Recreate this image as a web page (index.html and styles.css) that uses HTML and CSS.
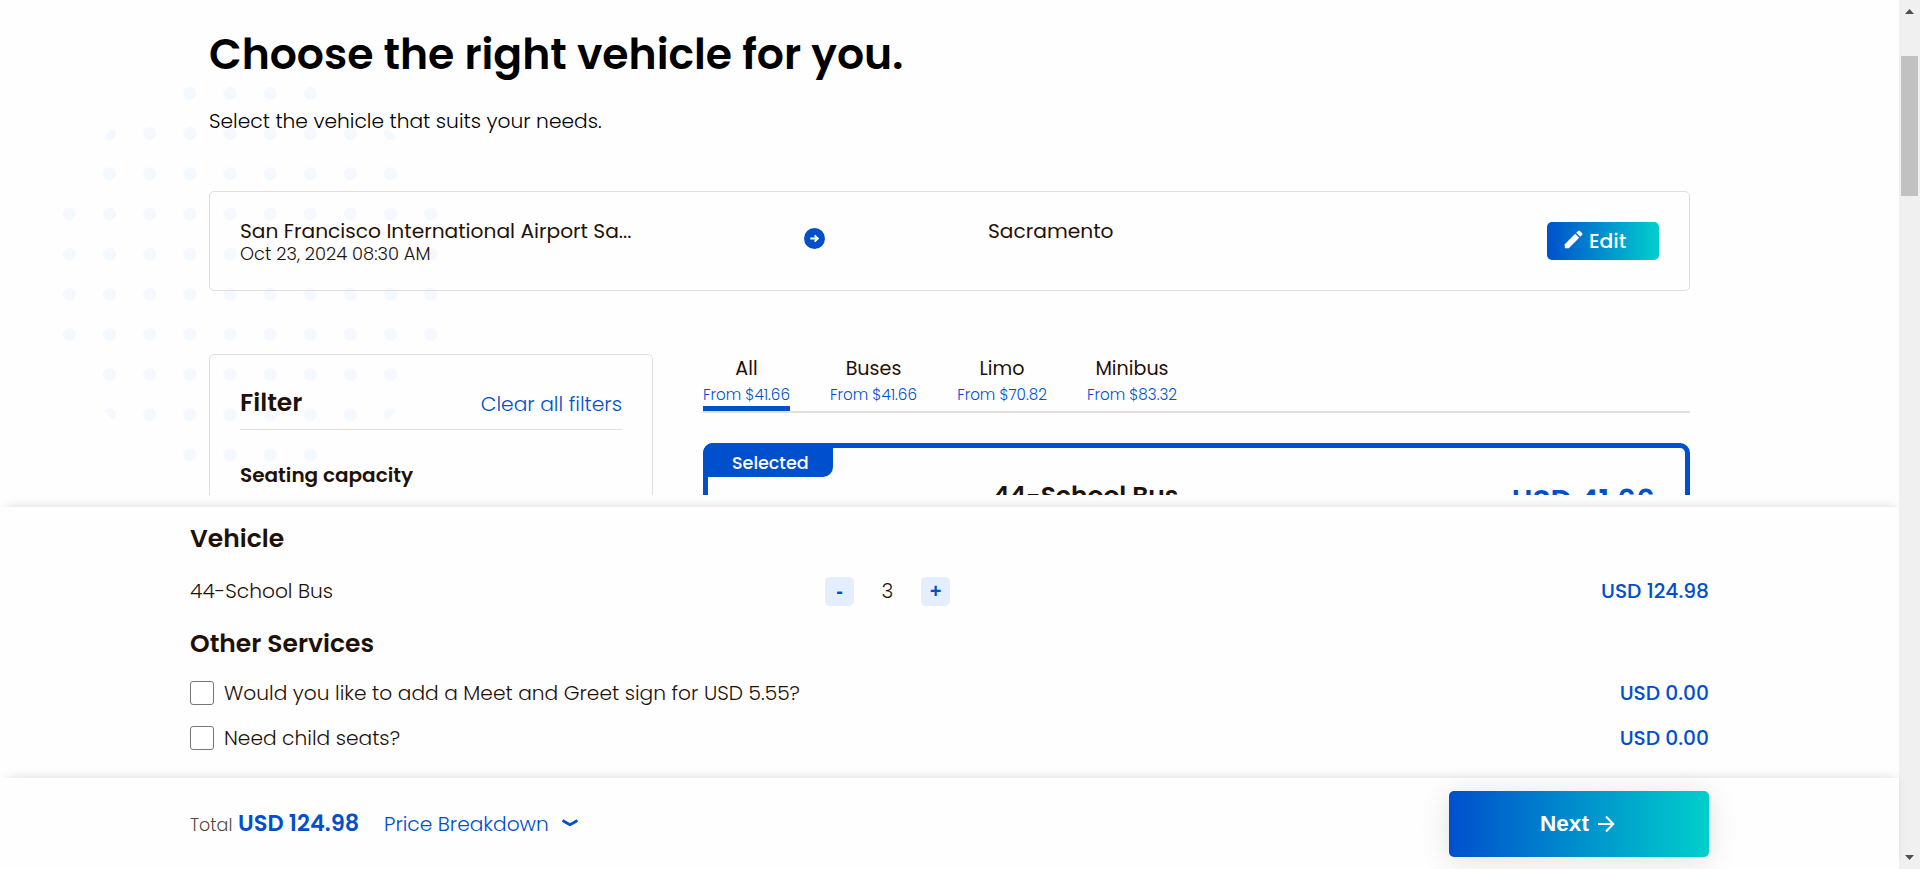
FILE: index.html
```html
<!DOCTYPE html>
<html lang="en">
<head>
<meta charset="utf-8">
<title>Choose your vehicle</title>
<link rel="stylesheet" href="styles.css">
</head>
<body>
<div class="window">
  <div class="page">
    <main class="content">
      <svg class="dots" width="400" height="400" viewBox="0 0 400 400">
        <defs>
          <pattern id="dot" width="40.15" height="40.15" patternUnits="userSpaceOnUse" x="-0.75" y="-0.75"><circle cx="20.1" cy="20.1" r="6.5" fill="#f4f8ff"/></pattern>
        </defs>
        <circle cx="200" cy="200" r="200" fill="url(#dot)"/>
      </svg>
      <div class="inner">
        <h1 class="title">Choose the right vehicle for you.</h1>
        <p class="subtitle">Select the vehicle that suits your needs.</p>
        <section class="trip">
          <div class="stop">
            <div class="place">San Francisco International Airport Sa...</div>
            <div class="date">Oct 23, 2024 08:30 AM</div>
          </div>
          <svg class="go" width="21" height="21" viewBox="0 0 21 21"><circle cx="10.5" cy="10.5" r="10.5" fill="#0050cd"/><path d="M6.3 10.5h6M10.6 7.4l3.3 3.1-3.3 3.1" fill="none" stroke="#fff" stroke-width="1.8"/></svg>
          <div class="stop"><div class="place">Sacramento</div></div>
          <button class="edit"><svg width="19" height="19" viewBox="0 0 19 19" fill="#fff"><path d="M0.8 14.2 11.2 3.8l4 4L4.8 18.2H0.8z"/><path d="M12.2 2.8 14.1.9q.9-.8 1.8 0l2.2 2.2q.9.9 0 1.8l-1.9 1.9z"/></svg><span>Edit</span></button>
        </section>
        <div class="columns">
          <aside class="filter">
            <div class="filter-head"><h2>Filter</h2><a>Clear all filters</a></div>
            <h3>Seating capacity</h3>
          </aside>
          <section class="results">
            <nav class="tabs">
              <div class="tab active"><b>All</b><small>From $41.66</small></div>
              <div class="tab"><b>Buses</b><small>From $41.66</small></div>
              <div class="tab wide"><b>Limo</b><small>From $70.82</small></div>
              <div class="tab wide"><b>Minibus</b><small>From $83.32</small></div>
            </nav>
            <article class="vehicle">
              <div class="badge">Selected</div>
              <div class="vehicle-name">44-School Bus</div>
              <div class="vehicle-price">USD 41.66</div>
            </article>
          </section>
        </div>
      </div>
    </main>
    <section class="sheet">
      <div class="sheet-panel">
        <h2>Vehicle</h2>
        <div class="row bus">
          <span class="name">44-School Bus</span>
          <div class="stepper"><button>-</button><span class="count">3</span><button>+</button></div>
          <span class="price">USD 124.98</span>
        </div>
        <h2 class="other">Other Services</h2>
        <div class="row opt"><i class="check"></i><span>Would you like to add a Meet and Greet sign for USD 5.55?</span><span class="price">USD 0.00</span></div>
        <div class="row opt"><i class="check"></i><span>Need child seats?</span><span class="price">USD 0.00</span></div>
      </div>
    </section>
    <footer class="bar">
      <span class="total">Total</span>
      <span class="sum">USD 124.98</span>
      <a class="breakdown">Price Breakdown<svg width="16" height="9" viewBox="0 0 16 9"><path d="M0.600 1.500Q4.500 4.200 8 5.600 11.500 4.200 15.400 1.500" fill="none" stroke="#0050cd" stroke-width="2.800"/></svg></a>
      <button class="next">Next<svg width="18" height="18" viewBox="0 0 18 18"><path d="M1 9h15M9 1.500 16.300 9 9 16.500" fill="none" stroke="#fff" stroke-width="2"/></svg></button>
    </footer>
  </div>
  <div class="scrollbar">
    <svg width="9" height="5" viewBox="0 0 9 5"><path d="M4.500 0 9 5H0z" fill="#505050"/></svg>
    <div class="thumb"></div>
    <svg width="9" height="5" viewBox="0 0 9 5"><path d="M0 0h9L4.500 5z" fill="#505050"/></svg>
  </div>
</div>
</body>
</html>
```
FILE: styles.css
```css
*{box-sizing:border-box}
body{margin:0;font-family:Poppins,Inter,"Liberation Sans",sans-serif;color:#1f1108;background:#fefefe}
h1,h2,h3,p{margin:0;font-weight:inherit}
button{border:0;padding:0;font:inherit;color:inherit}
.window{display:flex;width:1920px;height:869px;overflow:hidden}
.page{width:1899px;display:flex;flex-direction:column}
.content{position:relative;height:495px;overflow:hidden}
.dots{position:absolute;left:50px;top:74.3px}
.inner{position:relative;width:1481px;margin-left:209px;padding-top:24px}
.title{font-size:42.5px;line-height:60px;font-weight:600;color:#000}
.subtitle{font-size:20.2px;line-height:30px;font-weight:300;margin-top:22px;color:#000}
.trip{display:grid;grid-template-columns:564px 184px 1fr 112px;align-items:start;height:100px;margin-top:55px;padding:27px 30px 0;border:1px solid #dfdfdf;border-radius:5px}
.place{font-size:20.2px;line-height:24px}
.date{font-size:17.85px;line-height:20px;margin-top:1px;font-weight:300}
.go{margin-top:9px}
.edit{display:flex;height:38px;margin-top:3px;padding:8px 0 0 17px;border-radius:5px;background:linear-gradient(90deg,#0050cd,#00cfcc);color:#fff;font-size:20.25px;line-height:22px;font-weight:500}
.edit span{margin:0 0 0 6px}
.columns{display:flex;gap:50px;margin-top:63px}
.filter{width:444px;height:300px;border:1px solid #dfdfdf;border-radius:5px;padding:33px 30px}
.filter-head{display:flex;justify-content:space-between;align-items:baseline;height:42px;border-bottom:1px solid #dfdfdf}
.filter-head h2{font-size:25px;line-height:30px;font-weight:600}
.filter-head a{font-size:20.25px;font-weight:300;color:#0050cd}
.filter h3{font-size:20px;line-height:24px;font-weight:600;margin-top:33px}
.results{width:987px;padding-top:3px}
.tabs{display:flex;gap:40px;border-bottom:2px solid #e4dfdf}
.tab{width:87px;padding-bottom:1px;border-bottom:5px solid transparent;text-align:center;white-space:nowrap}
.wide{width:90px}
.active{border-color:#0050cd}
.tab b{display:block;font-size:19.125px;line-height:24px;font-weight:400}
.tab small{display:block;font-size:15.15px;line-height:20px;font-weight:300;margin-top:4px;color:#0050cd}
.vehicle{position:relative;display:flex;justify-content:space-between;height:200px;margin-top:30px;padding:32px 30px 0 285px;border:5px solid #0050cd;border-radius:10px}
.badge{position:absolute;left:-5px;top:-5px;width:130px;height:34px;padding:8px 0 0 29px;border-radius:10px 0 10px 0;background:#0050cd;color:#fff;font-size:17.55px;line-height:24px;font-weight:500}
.vehicle-name{font-size:25px;line-height:30px;font-weight:600;margin-top:1px}
.vehicle-price{font-size:29.7px;line-height:41px;font-weight:600;color:#0050cd}
.sheet{height:283px;padding-top:12px;overflow:hidden;background:#fefefe}
.sheet-panel{height:271px;padding:17px 190px 0;box-shadow:2px -5px 10px -5px rgba(0,0,0,.14);background:#fefefe}
.sheet h2{font-size:25px;line-height:30px;font-weight:600}
.row{display:flex;align-items:center;font-size:20.2px;font-weight:300}
.bus{height:29px;margin-top:23px}
.bus span{padding-bottom:2px}
.name{width:635px}
.stepper{display:flex;width:125px;align-items:center;justify-content:space-between}
.stepper button{width:29px;height:29px;border-radius:5px;background:#e5eeff;color:#0050cd;font:bold 20px "Liberation Sans",Arial,sans-serif}
.price{margin-left:auto;font-weight:500;color:#0050cd}
.sheet .other{margin-top:23px}
.opt{height:24px;margin-top:21px}
.other+.opt{margin-top:22px}
.check{width:24px;height:24px;margin-right:10px;border:1px solid #767676;border-radius:3px;background:#fff}
.bar{display:flex;align-items:baseline;position:relative;height:91px;padding:13px 190px 0;background:#fefefe;box-shadow:2px -5px 10px -5px rgba(0,0,0,.14)}
.total{width:48px;font-size:17.5px;font-weight:300;color:#58493f}
.sum{width:146px;font-size:22.500px;font-weight:600;color:#0050cd}
.breakdown{font-size:20.2px;font-weight:300;color:#0050cd}
.breakdown svg{margin-left:13px;vertical-align:3px}
.next{display:flex;align-items:center;justify-content:center;width:260px;height:66px;margin-left:auto;padding-right:3px;border-radius:5px;background:linear-gradient(90deg,#0050cd,#00cfcc);box-shadow:0 4px 30px rgba(0,0,0,.12);color:#fff;font:bold 22.500px "Liberation Sans",Arial,sans-serif}
.next svg{margin-left:8px}
.scrollbar{display:flex;flex-direction:column;align-items:center;width:21px;padding:9px 0;background:#f0f0f0}
.thumb{width:17px;height:140px;margin:42px 0 auto;background:#c1c1c1}
```
